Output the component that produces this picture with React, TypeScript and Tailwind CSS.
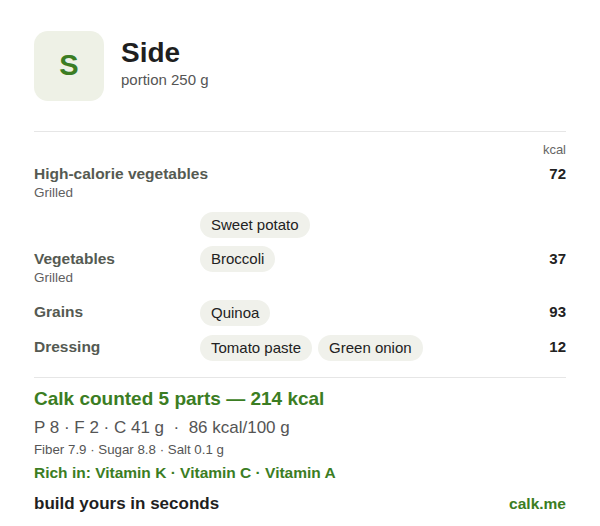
const rows = [
  { name: "High-calorie vegetables", note: "Grilled", chips: ["Sweet potato"], kcal: 72, wrap: true },
  { name: "Vegetables", note: "Grilled", chips: ["Broccoli"], kcal: 37 },
  { name: "Grains", chips: ["Quinoa"], kcal: 93 },
  { name: "Dressing", chips: ["Tomato paste", "Green onion"], kcal: 12 },
];

const gaps = ["", "mt-[8px]", "mt-[13px]", "mt-[9px]"];

const Chip = ({ label }: { label: string }) => (
  <span className="inline-flex h-[26px] items-center rounded-full bg-[#f0f1eb] px-[11px] text-[15px] text-[#222]">
    {label}
  </span>
);

const App = () => {
  return (
    <div className="min-h-[526px] w-[600px] bg-white px-[34px] pt-[31px] font-['Liberation_Sans',Arial,sans-serif] text-[#222]">
      <div className="flex items-center gap-[17px]">
        <div className="flex h-[70px] w-[70px] items-center justify-center rounded-[14px] bg-[#eef1e6] text-[29px] font-bold text-[#3b7d23]">
          S
        </div>
        <div className="-mt-[6px]">
          <div className="text-[28px] font-bold leading-[34px] text-[#1f1f1f]">Side</div>
          <div className="text-[15px] leading-[20px] text-[#555]">portion 250 g</div>
        </div>
      </div>

      <div className="mt-[30px] border-t border-[#e6e6e6]" />

      <div className="mt-[10px] text-right text-[13px] leading-[16px] text-[#666]">kcal</div>

      <div className="mt-[6px] flex flex-col">
        {rows.map((row, i) => (
          <div key={row.name} className={gaps[i]}>
            {row.wrap ? (
              <>
                <div className="flex items-start justify-between">
                  <div>
                    <div className="text-[15.5px] font-bold leading-[20px] text-[#555a52]">{row.name}</div>
                    <div className="text-[13.5px] leading-[18px] text-[#5f5f5f]">{row.note}</div>
                  </div>
                  <div className="text-[15px] font-bold leading-[20px] text-[#222]">{row.kcal}</div>
                </div>
                <div className="mt-[10px] flex gap-[6px] pl-[166px]">
                  {row.chips.map((c) => (
                    <Chip key={c} label={c} />
                  ))}
                </div>
              </>
            ) : (
              <div className="grid grid-cols-[166px_1fr_auto] items-start">
                <div className={row.note ? "pt-[3px]" : "pt-[2px]"}>
                  <div className="text-[15.5px] font-bold leading-[20px] text-[#555a52]">{row.name}</div>
                  {row.note && <div className="text-[13.5px] leading-[18px] text-[#5f5f5f]">{row.note}</div>}
                </div>
                <div className="flex gap-[6px]">
                  {row.chips.map((c) => (
                    <Chip key={c} label={c} />
                  ))}
                </div>
                <div className={`${row.note ? "pt-[3px]" : "pt-[2px]"} text-[15px] font-bold leading-[20px] text-[#222]`}>
                  {row.kcal}
                </div>
              </div>
            )}
          </div>
        ))}
      </div>

      <div className="mt-[16px] border-t border-[#e6e6e6]" />

      <div className="mt-[10px] text-[19px] font-bold leading-[22px] text-[#3b7d23]">
        Calk counted 5 parts — 214 kcal
      </div>
      <div className="mt-[8px] text-[17px] leading-[20px] text-[#555]">
        P 8 · F 2 · C 41 g &nbsp;· &nbsp;86 kcal/100 g
      </div>
      <div className="mt-[3px] text-[13.3px] leading-[18px] text-[#555]">Fiber 7.9 · Sugar 8.8 · Salt 0.1 g</div>
      <div className="mt-[4px] text-[15.5px] font-bold leading-[20px] text-[#3b7d23]">
        Rich in: Vitamin K · Vitamin C · Vitamin A
      </div>
      <div className="mt-[11px] flex items-center justify-between">
        <span className="text-[17px] font-bold leading-[20px] text-[#1f1f1f]">build yours in seconds</span>
        <span className="text-[15.5px] font-bold leading-[20px] text-[#3b7d23]">calk.me</span>
      </div>
    </div>
  );
};

export default App;
